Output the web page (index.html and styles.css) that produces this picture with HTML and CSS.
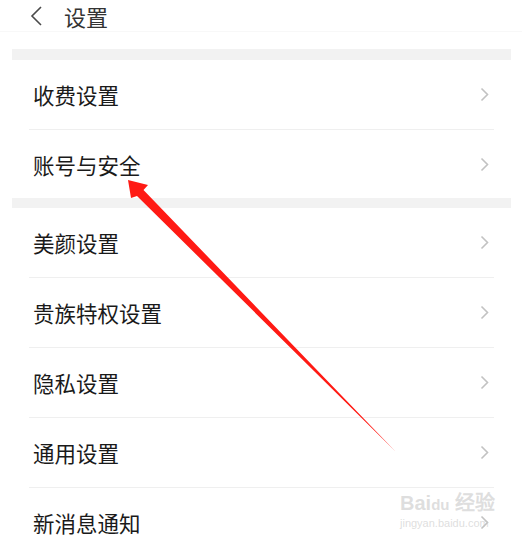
FILE: index.html
```html
<!DOCTYPE html>
<html lang="zh-CN">
<head>
    <meta charset="UTF-8">
    <meta name="viewport" content="width=device-width, initial-scale=1.0">
    <title>设置</title>
    <link rel="stylesheet" href="styles.css">
</head>
<body>
    <div class="page">
        <div class="header">
            <svg class="back" width="14" height="20" viewBox="0 0 14 20">
                <polyline points="11,1 2,10 11,19" fill="none" stroke="#4a4a4a" stroke-width="1.6"/>
            </svg>
            <span class="title">设置</span>
        </div>
        <div class="gap"></div>
        <div class="list">
            <div class="row"><span>收费设置</span><svg class="arrow" width="9" height="15" viewBox="0 0 9 15"><polyline points="1.5,1.5 7.5,7.5 1.5,13.5" fill="none" stroke="#c2c2c2" stroke-width="1.6"/></svg></div>
            <div class="row short"><span>账号与安全</span><svg class="arrow" width="9" height="15" viewBox="0 0 9 15"><polyline points="1.5,1.5 7.5,7.5 1.5,13.5" fill="none" stroke="#c2c2c2" stroke-width="1.6"/></svg></div>
        </div>
        <div class="gap small"></div>
        <div class="list">
            <div class="row"><span>美颜设置</span><svg class="arrow" width="9" height="15" viewBox="0 0 9 15"><polyline points="1.5,1.5 7.5,7.5 1.5,13.5" fill="none" stroke="#c2c2c2" stroke-width="1.6"/></svg></div>
            <div class="row"><span>贵族特权设置</span><svg class="arrow" width="9" height="15" viewBox="0 0 9 15"><polyline points="1.5,1.5 7.5,7.5 1.5,13.5" fill="none" stroke="#c2c2c2" stroke-width="1.6"/></svg></div>
            <div class="row"><span>隐私设置</span><svg class="arrow" width="9" height="15" viewBox="0 0 9 15"><polyline points="1.5,1.5 7.5,7.5 1.5,13.5" fill="none" stroke="#c2c2c2" stroke-width="1.6"/></svg></div>
            <div class="row"><span>通用设置</span><svg class="arrow" width="9" height="15" viewBox="0 0 9 15"><polyline points="1.5,1.5 7.5,7.5 1.5,13.5" fill="none" stroke="#c2c2c2" stroke-width="1.6"/></svg></div>
            <div class="row"><span>新消息通知</span><svg class="arrow" width="9" height="15" viewBox="0 0 9 15"><polyline points="1.5,1.5 7.5,7.5 1.5,13.5" fill="none" stroke="#c2c2c2" stroke-width="1.6"/></svg></div>
        </div>
    </div>

    <!-- red annotation arrow drawn over the screenshot -->
    <svg class="mark" width="522" height="540" viewBox="0 0 522 540">
        <polygon points="128,180 148,185 143.5,190 395,451 137,196 131,198" fill="#ff1a14"/>
    </svg>

    <div class="watermark">
        <div class="wm-logo">Bai<span class="wm-du">du</span> 经验</div>
        <div class="wm-url">jingyan.baidu.com</div>
    </div>
</body>
</html>
```

FILE: styles.css
```css
body {
    margin: 0;
    background: #fff;
    font-family: "Noto Sans CJK SC", "Noto Sans", sans-serif;
    color: #1a1a1a;
    overflow: hidden;
}
.page {
    padding: 0 11px 0 12px;
}
.header {
    height: 31px;
    display: flex;
    align-items: center;
    margin: 0 -11px 0 -12px;
    padding-left: 30px;
    border-bottom: 1px solid #f8f8f8;
}
.back {
    display: block;
}
.title {
    margin-left: 20px;
    font-size: 22px;
    color: #333;
}
.gap {
    height: 11px;
    margin-top: 17px;
    background: #f2f2f2;
}
.gap.small {
    height: 10px;
    margin-top: 0;
}
.row {
    height: 69px;
    margin: 0 17px;
    padding: 0 4px;
    display: flex;
    align-items: center;
    justify-content: space-between;
    border-bottom: 1px solid #efefef;
    font-size: 21.5px;
}
.list .row:last-child {
    border-bottom: none;
}
.row.short {
    height: 68px;
}
.arrow {
    display: block;
    margin-right: 1px;
}
.mark {
    position: absolute;
    left: 0;
    top: 0;
}
.watermark {
    position: absolute;
    left: 400px;
    top: 492px;
    color: rgba(200, 200, 200, 0.6);
    font-family: "Liberation Sans", sans-serif;
}
.wm-logo {
    font-size: 20px;
    font-weight: bold;
    line-height: 22px;
}
.wm-du {
    font-size: 15px;
}
.wm-url {
    font-size: 11px;
    line-height: 14px;
}
```
